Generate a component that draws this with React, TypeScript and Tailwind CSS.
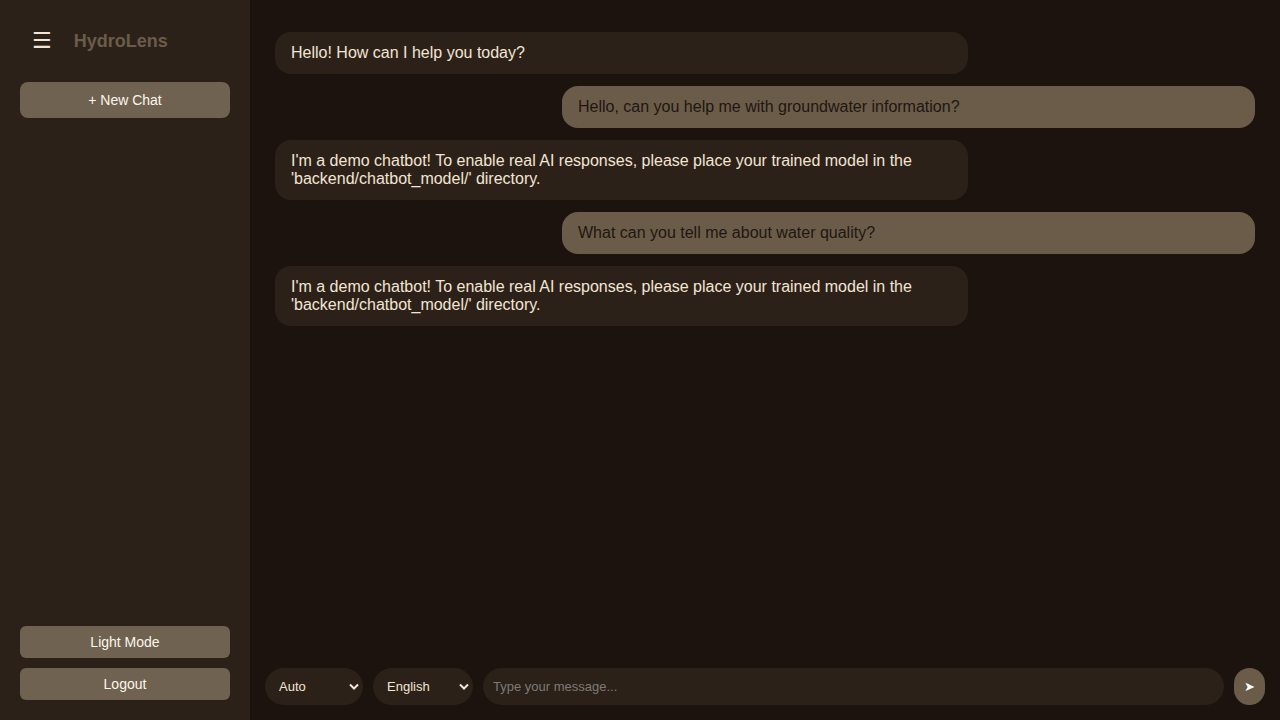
import React from "react";

const font = { fontFamily: '"Liberation Sans", Arial, sans-serif' };

function Bubble({ text, user }: { text: React.ReactNode; user?: boolean }) {
  return (
    <div className={user ? "flex justify-end" : "flex justify-start"}>
      <div
        className={
          user
            ? "w-[693px] rounded-2xl bg-[#6b5c4a] px-4 py-3 text-base leading-[18px] text-[#1f1610]"
            : "w-[693px] rounded-2xl bg-[#2c2119] px-4 py-3 text-base leading-[18px] text-[#f3e5d3]"
        }
      >
        {text}
      </div>
    </div>
  );
}

function Chevron() {
  return (
    <svg className="absolute right-[4px] top-[15px]" width="10" height="7" viewBox="0 0 10 7">
      <path d="M1 1.5 L5 5.5 L9 1.5" fill="none" stroke="#f3e5d3" strokeWidth="2" />
    </svg>
  );
}

export default function App() {
  return (
    <div className="flex h-[720px] w-[1280px] overflow-hidden bg-[#1c130e]" style={font}>
      <aside className="flex w-[250px] shrink-0 flex-col bg-[#2c2119] px-5 pb-5 pt-[26px]">
        <div className="flex h-[28px] items-center pl-[12px]">
          <span className="mt-[2px] text-[22px] leading-none text-[#f3e5d3]" style={{ fontFamily: '"DejaVu Sans", sans-serif' }}>☰</span>
          <span className="ml-[22px] mt-[2px] text-[18px] font-bold text-[#6b5c4a]">HydroLens</span>
        </div>
        <button className="mt-[28px] h-[36px] w-full rounded-lg bg-[#6f6250] text-[14px] text-[#fdf6ec]">
          + New Chat
        </button>
        <div className="flex-1" />
        <div className="flex flex-col gap-[10px]">
          <button className="h-[32px] w-full rounded-md bg-[#6f6250] text-[14px] text-[#fdf6ec]">Light Mode</button>
          <button className="h-[32px] w-full rounded-md bg-[#6f6250] text-[14px] text-[#fdf6ec]">Logout</button>
        </div>
      </aside>
      <main className="flex flex-1 flex-col">
        <div className="flex flex-1 flex-col gap-3 px-[25px] pt-8">
          <Bubble text="Hello! How can I help you today?" />
          <Bubble user text="Hello, can you help me with groundwater information?" />
          <Bubble
            text={
              <>
                I'm a demo chatbot! To enable real AI responses, please place your trained model in the
                <br />
                'backend/chatbot_model/' directory.
              </>
            }
          />
          <Bubble user text="What can you tell me about water quality?" />
          <Bubble
            text={
              <>
                I'm a demo chatbot! To enable real AI responses, please place your trained model in the
                <br />
                'backend/chatbot_model/' directory.
              </>
            }
          />
        </div>
        <div className="flex items-center gap-[10px] pb-[15px] pl-[15px] pr-[15px]">
          <div className="relative h-[37px] w-[98px] rounded-full bg-[#2c2119]">
            <span className="absolute left-[14px] top-[10px] text-[13px] leading-[17px] text-[#f3e5d3]">Auto</span>
            <Chevron />
          </div>
          <div className="relative h-[37px] w-[100px] rounded-full bg-[#2c2119]">
            <span className="absolute left-[14px] top-[10px] text-[13px] leading-[17px] text-[#f3e5d3]">English</span>
            <Chevron />
          </div>
          <input
            className="h-[37px] flex-1 rounded-full bg-[#2c2119] px-[10px] text-[13px] text-[#f3e5d3] outline-none placeholder:text-[#7d7a76]"
            placeholder="Type your message..."
            style={font}
          />
          <button className="flex h-[37px] w-[31px] items-center justify-center rounded-full bg-[#6b5c4a] text-[13px] text-white">
            ➤
          </button>
        </div>
      </main>
    </div>
  );
}
